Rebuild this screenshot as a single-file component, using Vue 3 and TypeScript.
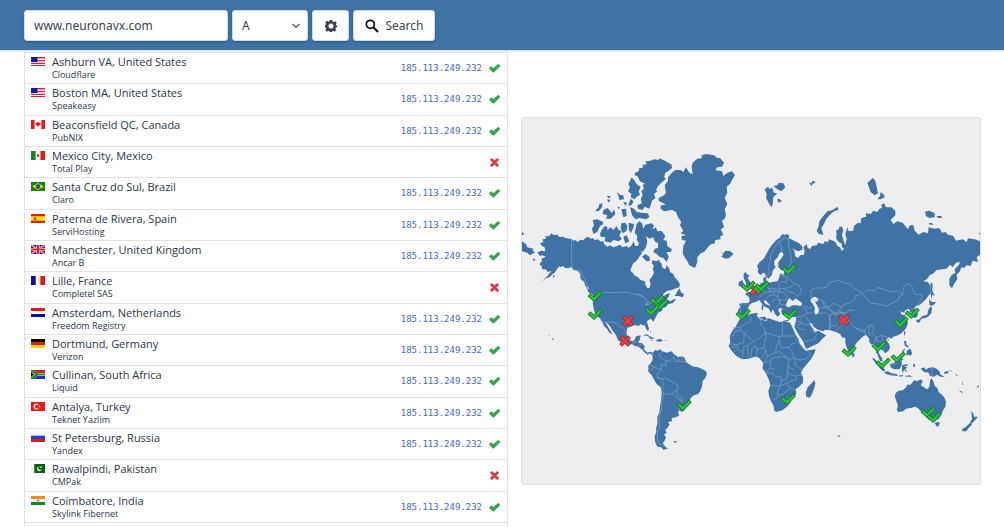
<script setup lang="ts">
import { ref } from 'vue'

type Sheet = [number, number, string]
interface Row { flag: string; city: string; isp: string; ok: boolean }

const domain = ref('www.neuronavx.com')
const recordType = ref('A')
const ip = '185.113.249.232'

const rows: Row[] = [
  { flag: 'us', city: 'Ashburn VA, United States', isp: 'Cloudflare', ok: true },
  { flag: 'us', city: 'Boston MA, United States', isp: 'Speakeasy', ok: true },
  { flag: 'ca', city: 'Beaconsfield QC, Canada', isp: 'PubNIX', ok: true },
  { flag: 'mx', city: 'Mexico City, Mexico', isp: 'Total Play', ok: false },
  { flag: 'br', city: 'Santa Cruz do Sul, Brazil', isp: 'Claro', ok: true },
  { flag: 'es', city: 'Paterna de Rivera, Spain', isp: 'ServiHosting', ok: true },
  { flag: 'gb', city: 'Manchester, United Kingdom', isp: 'Ancar B', ok: true },
  { flag: 'fr', city: 'Lille, France', isp: 'Completel SAS', ok: false },
  { flag: 'nl', city: 'Amsterdam, Netherlands', isp: 'Freedom Registry', ok: true },
  { flag: 'de', city: 'Dortmund, Germany', isp: 'Verizon', ok: true },
  { flag: 'za', city: 'Cullinan, South Africa', isp: 'Liquid', ok: true },
  { flag: 'tr', city: 'Antalya, Turkey', isp: 'Teknet Yazlim', ok: true },
  { flag: 'ru', city: 'St Petersburg, Russia', isp: 'Yandex', ok: true },
  { flag: 'pk', city: 'Rawalpindi, Pakistan', isp: 'CMPak', ok: false },
  { flag: 'in', city: 'Coimbatore, India', isp: 'Skylink Fibernet', ok: true },
]

const flags: Record<string, string> = {
  us: '<path fill="#fff" d="M0 0h14v9H0z"/><path fill="#d8232e" d="M0 0h14v1.5H0zM0 3h14v1.3H0zM0 5.7h14v1.3H0zM0 8h14v1H0z"/><path fill="#0a1fa0" d="M0 0h6.5v5H0z"/>',
  ca: '<path fill="#fff" d="M0 0h14v9H0z"/><path fill="#f21313" d="M0 0h3.6v9H0zM10.4 0H14v9h-3.6zM7 1.4l.8 1.3 1.8.4-.5 1.8-1.6.9V7h-1V5.8l-1.6-.9-.5-1.8 1.8-.4z"/>',
  mx: '<path fill="#fff" d="M0 0h14v9H0z"/><path fill="#0b8b1d" d="M0 0h4.6v9H0z"/><path fill="#f21313" d="M9.4 0H14v9H9.4z"/><path fill="#6b5120" d="M6 3.3h2v2.4H6z"/>',
  br: '<path fill="#078a12" d="M0 0h14v9H0z"/><path fill="#f3e81c" d="M7 1l5.6 3.5L7 8 1.4 4.5z"/><circle cx="7" cy="4.5" r="2.3" fill="#12208e"/><path stroke="#cfe0f5" stroke-width=".5" d="M5 4l4 1"/>',
  es: '<path fill="#ea1c12" d="M0 0h14v9H0z"/><path fill="#ffdf12" d="M0 2.2h14v4.6H0z"/><path fill="#b5371c" d="M3 3h1.4v1L6 6H2.2l.9-1z"/>',
  gb: '<path fill="#1b1d78" d="M0 0h14v9H0z"/><path stroke="#fff" stroke-width="1.6" d="M0 0l14 9M14 0L0 9"/><path stroke="#e01c32" stroke-width=".8" d="M0 0l14 9M14 0L0 9"/><path fill="#fff" d="M5.4 0h3.2v9H5.4zM0 3h14v3H0z"/><path fill="#e01c32" d="M6 0h2v9H6zM0 3.6h14v1.8H0z"/>',
  fr: '<path fill="#fff" d="M0 0h14v9H0z"/><path fill="#0c0ca6" d="M0 0h4.7v9H0z"/><path fill="#f21313" d="M9.3 0H14v9H9.3z"/>',
  nl: '<path fill="#fff" d="M0 0h14v9H0z"/><path fill="#ed1515" d="M0 0h14v3H0z"/><path fill="#0c0ca6" d="M0 6h14v3H0z"/>',
  de: '<path fill="#000" d="M0 0h14v3H0z"/><path fill="#d82410" d="M0 3h14v3H0z"/><path fill="#ffd21a" d="M0 6h14v3H0z"/>',
  za: '<path fill="#fff" d="M0 0h14v9H0z"/><path fill="#ef1515" d="M2 0h12v3H6.4z"/><path fill="#1434c0" d="M2 9h12V6H6.4z"/><path fill="#0b8a2c" d="M0 0h2l5 3.6h7v1.8H7L2 9H0z"/><path fill="#f0c41c" d="M0 1.2L4.6 4.5 0 7.8z"/><path fill="#111" d="M0 2.2l3.2 2.3L0 6.8z"/>',
  tr: '<path fill="#f21313" d="M0 0h14v9H0z"/><circle cx="5.4" cy="4.5" r="2.9" fill="#fff"/><circle cx="6.2" cy="4.5" r="2.1" fill="#f21313"/><path fill="#fff" d="M7.8 3.4l1.8 1.1-1.8 1.1z"/>',
  ru: '<path fill="#f4f4f4" d="M0 0h14v3H0z"/><path fill="#1c3fd4" d="M0 2.7h14V6H0z"/><path fill="#ee1616" d="M0 6h14v3H0z"/>',
  pk: '<path fill="#f4f4f4" d="M0 0h14v9H0z"/><path fill="#07610f" d="M3.3 0H14v9H3.3z"/><circle cx="8.4" cy="4.8" r="2.4" fill="#fff"/><circle cx="9.2" cy="4" r="2.1" fill="#07610f"/><path fill="#fff" d="M9.4 2.6h1.3v1.3H9.4z"/>',
  in: '<path fill="#f4f4f4" d="M0 0h14v9H0z"/><path fill="#f08c1c" d="M0 0h14v3H0z"/><path fill="#0a8f1e" d="M0 6h14v3H0z"/><circle cx="7" cy="4.5" r="1.1" fill="#6b78b8"/>',
}

// Joins points surveyed on neighbouring sheets; each sheet carries its own origin.
function trace(...sheets: Sheet[]): string {
  const points: string[] = []
  for (const [dx, dy, list] of sheets) {
    for (const pair of list.trim().split(/\s+/)) {
      const [x, y] = pair.split(',').map(Number)
      points.push(`${x + dx} ${y + dy}`)
    }
  }
  return 'M' + points.join('L')
}
const each = (dx: number, dy: number, lists: string[]): string[] => lists.map((l) => trace([dx, dy, l]))

const land: string[] = [
  // North and Central America
  trace(
    [0, 0, '60,310 70,306 68,298 78,296 77,288 86,289 95,280 100,285 112,284 118,291 130,290 136,294 155,297 160,302 166,300 172,306 182,299 190,301 196,294 205,290 211,296 218,294 224,300 234,298 242,305 250,303 252,312 262,320 270,316 280,322 292,318 300,314 308,322 320,318 326,324 336,314 340,304 346,318 354,318 357,306 362,300 366,312 372,318 362,328 366,340 358,350 350,362 340,370 335,380 331,392 338,398 345,408 352,410 362,420 375,424 376,434 382,444 388,445 392,432 388,420 396,410 402,398 398,385 402,378 395,370 398,360 408,364 416,360 425,372 426,382 436,388 440,375 448,386 450,396 460,402 464,412 472,420 480,432 478,442 464,446 455,450 442,452 432,460 424,474 440,462 450,460 446,470 440,478 450,484 462,478 468,478 458,490 445,492 438,500 428,505 426,512 414,518 408,530 400,545'],
    [0, 480, '392,56 380,64 384,76 387,88 384,94 378,86 374,76 368,76 362,73 355,78 346,75 335,78 322,84 319,98 322,110 328,120 337,124 344,119 348,109 362,106 360,116 355,128 366,130 374,138 372,148 382,158 390,155 398,158 396,166 390,160 383,164 372,156 366,148 355,140 345,138 335,132 325,134 312,130 295,122 291,114 288,105 278,92 272,82 262,70 256,66 264,80 270,90 277,103 268,98 262,88 252,78 248,68 240,55 228,48 222,30 218,10'],
    [0, 0, '218,490 222,475 219,464 205,452 206,444 196,438 192,426 182,412 180,400 172,392 160,390 155,382 144,384 135,385 130,378 120,382 118,378 112,386 104,398 95,405 88,412 76,416 65,425 82,408 90,398 95,392 84,396 76,388 66,388 66,380 58,372 66,364 64,356 78,350 66,346 60,348 52,338 62,332 76,334 74,322 66,318']
  ),
  // South America
  trace([0, 480, '398,158 405,150 414,152 420,147 426,154 440,158 455,154 462,163 475,171 486,169 494,174 498,186 510,194 520,200 534,202 545,206 558,214 561,222 556,234 548,243 546,260 541,272 535,282 522,286 512,294 508,305 500,318 492,332 484,336 478,330 474,338 478,346 468,352 455,354 456,364 444,366 449,374 442,384 436,390 440,398 432,404 438,412 434,422 428,430 436,440 444,446 430,449 424,442 412,440 405,425 404,408 409,396 408,384 412,372 412,350 418,338 420,320 423,300 425,280 422,262 410,252 403,240 395,226 384,214 386,204 384,198 392,190 398,180 397,168']),
  // Eurasia
  trace(
    [780, 60, '10,230 18,222 28,226 26,234 42,242 55,248 66,258 68,268 56,274 44,270 38,264 44,276 46,290 55,294 60,286 72,284 74,272 70,262 80,252 82,262 90,268 96,258 110,256 114,248 130,252 134,244 145,246 146,238 160,242 168,248 172,258 180,262 186,274 192,266 186,262 184,250 176,246 168,234 170,222 168,212 176,208 178,200 186,200 190,210 186,224 190,240 196,256 200,236 196,222 202,202 206,214 220,212 222,198 234,188 242,190 244,174 258,170 258,160 272,162 280,152 292,156 298,146 306,144 304,134 312,130 318,142 334,142 346,152 346,166 332,180 340,192 352,184 368,188 374,196 384,208 390,196 400,196 404,212 416,224 430,216 444,220 446,202 462,206 478,204 486,218 496,216 504,224 520,228 528,242 548,238 560,246 564,235 584,238 600,244 600,284 590,292 594,306 578,302 572,318 560,316 552,324 544,322 540,334 530,344 532,358 522,372 516,385 508,376 508,358 514,346 526,338 524,328 536,316 540,306 528,308 518,322 510,314 500,326 470,330 458,342 450,344 442,356 430,364 444,366 452,378 452,398 442,412 432,424 422,432'],
    [900, 450, '300,44 288,48 283,55 292,64 294,76 286,84 278,82 276,70 268,64 268,56 256,60 252,68 240,64 246,74 258,76 254,84 264,96 262,106 256,118 246,128 234,136 220,140 214,146 205,142 198,150 206,160 210,172 206,182 195,190 190,182 182,178 178,168 174,184 180,196 186,204 188,216 180,212 176,204 172,192 168,188 166,174 160,162 154,164 148,156 148,146 138,134 126,142 118,150 110,158 104,168 104,178 98,192 92,196 86,186 80,172 76,158 76,144 66,142 60,132 48,126 28,120 10,120'],
    [585, 480, '330,94 318,92 306,88 296,80 288,68 284,72 294,86 300,96 310,92 330,104 334,106 322,116 310,130 292,138 276,146 272,144 264,124 252,106 244,92 238,80 242,66 244,52 232,50 220,52 210,46 202,44 198,32 204,26 192,24 190,32 196,42 188,50 180,42 174,28'],
    [585, 240, '172,264 160,250 150,240 146,244 152,252 166,258 178,266 172,270 168,280 162,266 150,260 140,250 132,240 122,246 112,248 104,254 98,266 92,274 88,284 78,290 68,284 70,268 76,260 72,252 84,248 96,250 104,246 102,232 90,222 98,216 106,216 114,208 126,202 134,196 138,188 146,188 144,176 152,168 154,180 158,190 172,186 188,184 192,174 196,160 206,164 208,156 224,154 238,152 228,150 210,152 198,150 190,142 190,126 198,116 206,104 202,96 194,98 188,112 178,122 178,134 182,142 174,150 170,166 160,176 154,172 150,160 144,158 136,166 128,156 130,146 126,138 134,126 146,116 154,102 162,88 170,76 184,60 196,52 198,46 206,42 212,48']
  ),
  // Africa
  trace([585, 480, '78,50 92,46 105,42 118,40 128,39 126,48 134,56 148,62 154,64 158,54 170,58 182,62 195,66 208,63 225,68 234,86 242,104 250,116 254,130 262,142 272,152 286,150 302,148 298,160 288,178 276,192 264,206 258,218 264,232 264,248 252,260 242,268 244,282 232,294 226,308 214,322 202,331 184,336 178,332 176,318 168,304 162,288 160,272 166,256 162,240 152,218 142,205 145,190 136,178 130,172 118,170 102,176 82,178 68,170 60,164 48,150 41,138 46,126 44,108 52,92 62,80 68,68']),
  // Arctic islands and Canada
  ...each(0, 0, [
    '345,98 356,94 358,84 368,84 368,76 380,72 376,64 392,62 402,58 415,60 418,55 435,62 455,74 456,84 444,94 436,98 432,112 438,116 424,128 414,138 408,150 412,154 402,162 406,174 396,182 392,196 388,206 374,200 368,210 354,206 352,196 366,190 362,176 368,166 364,152 372,146 368,134 376,132 360,124 352,108 344,106',
    '335,112 344,122 350,132 362,142 356,154 360,164 350,170 344,178 332,172 334,162 324,154 330,142 325,132',
    '330,202 342,206 350,216 364,218 384,220 388,232 378,238 358,234 346,238 336,226',
    '350,252 358,244 366,250 370,266 376,254 394,250 402,256 398,268 408,262 412,274 424,272 436,288 430,300 440,302 442,318 456,328 452,336 440,336 446,350 440,366 430,354 418,350 410,342 400,336 404,326 414,324 414,310 404,304 400,292 388,296 378,288 382,304 378,322 368,336 358,328 360,312 350,300 352,288 344,278',
    '240,282 244,272 254,258 262,260 262,270 272,262 280,270 290,258 294,268 304,274 298,288 306,296 296,304 280,300 272,308 254,304 256,292 242,290',
    '218,240 232,238 250,246 248,254 240,258 232,276 220,282 216,266 222,256', '304,250 316,248 322,258 320,272 308,280 302,266',
    '326,248 342,252 340,264 332,280 326,268', '225,212 236,202 238,192 248,190 246,202 236,214', '250,210 262,204 270,212 276,220 282,208 286,222 272,236 258,236 262,226 248,222',
    '290,156 300,164 310,166 312,178 298,180 296,170', '304,208 318,206 320,228 310,232', '310,186 322,188 316,198', '260,168 272,168 268,176', '292,200 300,202 296,208', '324,198 332,176 340,184 336,194',
    '366,350 376,342 388,350 390,362 380,364 372,356', '310,290 320,286 328,304 316,310', '262,178 272,180 264,188', '6,276 14,282 6,286', '6,304 18,312 22,322 40,326 38,334 46,336 30,346 22,338 6,334', '38,355 48,360 40,362', '98,408 106,404 100,414',
    '464,468 478,445 484,458 492,462 488,472 476,468', '182,406 190,412 188,424 182,416', '196,436 206,450 214,460 220,464 206,458',
  ]),
  // Greenland, Svalbard, Iceland
  ...each(360, 0, [
    '155,80 158,68 172,56 186,54 184,46 200,42 222,46 232,54 240,54 252,68 246,80 232,82 226,90 246,94 250,108 262,98 276,94 285,106 276,120 270,132 260,140 262,158 254,174 262,192 254,208 258,224 254,236 246,242 252,262 242,268 250,284 240,290 242,298 226,300 224,310 210,314 202,324 192,336 182,340 172,352 172,366 165,384 148,376 142,364 134,352 128,340 130,318 138,302 126,300 124,288 138,286 122,280 130,272 120,256 124,246 114,232 108,216 96,210 72,214 62,206 62,196 78,194 56,182 56,174 72,166 78,158 74,136 84,122 84,112 96,98 106,90 122,90 130,96 138,82 148,98 158,102',
    '374,148 384,140 390,148 396,142 402,158 412,160 400,172 398,194 394,202 388,192 378,174 380,162', '400,138 412,136 416,128 430,130 436,142 424,154 412,148', '412,178 418,176 426,184 414,188',
    '240,334 250,340 256,332 272,334 280,342 268,354 256,356 244,350 250,342',
  ]),
  // Russian Arctic
  ...each(780, 60, ['86,66 94,70 98,62 108,66 98,72 94,78', '262,68 270,62 278,53 286,62 290,80 294,100 284,106 272,96', '292,118 300,108 302,96 312,104 314,112 302,118', '172,140 175,150 162,154 150,164 138,178 132,192 124,204 130,224 116,222 110,212 116,198 118,184 128,170 142,154 158,150', '435,155 448,152 464,160 464,172 448,174 438,168', '470,168 484,168 486,174 474,174', '446,190 454,188 462,194 450,194', '596,220 600,218 600,224']),
  // British Isles
  ...each(585, 240, ['92,155 96,164 104,164 98,174 104,184 110,192 114,202 102,206 88,206 94,196 92,186 86,174 86,162', '72,186 82,180 86,190 80,198 70,198', '132,292 150,290 156,296 150,302', '140,254 146,254 144,270 140,270', '204,300 222,300 218,304']),
  trace([585, 480, '298,240 301,250 298,264 290,284 284,293 274,290 272,278 278,262 286,254']),
  // Asia and Oceania
  ...each(900, 450, [
    '228,308 236,302 250,300 258,292 262,284 272,284 278,276 284,270 290,274 302,268 308,274 302,286 312,292 322,298 328,290 330,274 334,264 340,274 344,288 352,294 356,306 366,314 374,324 378,336 376,350 368,364 362,378 356,386 346,392 336,386 326,390 318,376 310,372 312,362 302,364 296,356 286,350 272,354 258,356 250,364 236,366 230,360 234,348 230,336 224,318',
    '344,398 352,396 360,398 356,408 350,410', '454,364 460,370 462,380 474,380 468,388 460,396 454,402 450,396 456,388', '450,398 456,404 446,414 438,424 428,424 426,418 438,410',
    '302,236 312,232 318,240 324,234 340,232 352,238 360,246 360,252 374,262 362,260 350,254 342,260 330,258 326,248 312,246', '210,222 220,220 230,210 240,202 250,208 244,214 246,222 240,236 232,238 222,238 212,232', '155,203 164,206 176,220 188,228 196,242 188,244 176,230 166,218', '192,246 204,244 214,250 230,252 234,258 212,256 198,252',
    '246,226 262,222 264,226 252,230 262,232 256,238 262,246 256,244 252,238 250,248 246,244', '252,154 258,152 260,164 268,172 260,172 254,166', '262,180 272,176 276,190 272,198 266,194 258,196', '246,184 256,174 254,180 248,188', '288,90 298,88 308,78 322,74 324,62 330,50 336,52 334,70 324,80 316,84 304,86 298,98 290,96', '328,28 336,36 348,36 344,42 334,48 328,44', '332,-24 338,-18 337,2 344,18 336,14 336,30 332,14', '96,186 104,192 102,202 97,200',
    '252,124 257,126 252,140', '202,148 208,148 204,154', '238,256 250,256 248,259 238,260', '254,258 270,256 276,260 260,260', '280,222 286,222 284,232 280,230', '372,246 386,242 384,250 374,252', '388,238 396,244 392,244', '404,250 414,258 410,258', '416,300 428,306 426,310', '468,292 478,286 476,292', '53,436 62,438 56,442', '426,272 430,284 427,284',
  ]),
  // Caribbean, Hawaii and Falklands
  ...each(0, 480, ['368,106 380,103 392,110 404,116 392,118 384,108', '408,120 420,116 430,122 420,125 410,124', '434,121 440,121 438,124', '393,120 400,122 396,124', '84,104 91,108 88,108', '96,113 102,118 98,120', '458,424 472,424 466,429', '390,92 394,94 392,98']),
]

const water: string[] = each(585, 240, [
  '212,258 216,246 222,234 232,242 240,240 238,234 246,238 262,250 258,258 244,256 232,256 222,262', '290,234 300,230 310,236 308,244 300,246 306,256 312,268 310,280 302,284 298,276 300,264 292,250 286,242',
])

const borders: string[] = [
  ...each(0, 0, ['155,297 155,382 166,388 172,392 180,390 192,414 196,424 206,444', '230,458 325,457 335,462 350,463 360,466 370,472 378,478 384,488 378,496 388,494 398,484 408,484 420,474', '350,463 366,466 372,474']),
  ...each(0, 480, [
    '240,64 258,66 272,66 290,70 298,80 308,80 318,96', '375,6 377,15 384,8 392,5', '340,134 342,126 352,126', '350,138 358,136 368,132', '360,148 370,148',
    '425,154 418,166 424,176 438,182 438,198 424,192 424,210 412,220 412,232 428,238 434,232 450,242 472,254 474,268 468,272 472,286 486,292 486,304 478,316 476,332', '387,196 398,198 412,206 424,208', '387,214 396,208 402,198', '412,232 428,238 430,256 424,266 432,282 426,300 424,330 418,350 418,380 412,400 414,430 430,436', '432,282 446,284 456,280 470,270', '456,280 474,296 486,304', '438,182 450,182 462,170 466,184 498,186', '474,172 476,184', '486,170 486,184',
  ]),
  ...each(780, 60, [
    '92,392 105,384 122,384 140,382 148,368 176,360 190,368 214,374 224,386 244,396 236,406 226,408 224,420 206,430 196,432 184,440 170,434 158,430 150,442 140,438 126,420 112,418 104,426 94,412 92,392', '248,400 262,390 284,392 290,382 310,388 334,396 350,392 368,404 356,412 356,420 334,430 318,438 296,432 274,430 262,420 256,410 246,400', '368,404 370,382 382,370 396,380 404,402 426,404 424,420 414,432 416,442', '184,440 178,454 192,464 204,452 224,450', '126,420 134,440 150,450 168,460 178,454', '118,446 140,440 158,458 172,466',
  ]),
  ...each(900, 450, [
    '80,84 90,100 104,112 118,118 134,120 148,106 158,106 162,118 156,130 168,142 184,136 204,142', '104,112 122,124 134,124', '134,120 136,134', '48,124 62,108 74,98 80,84', '28,118 32,104 28,86 32,72 50,72 66,66 80,70', '28,108 48,108 62,92 66,66', '168,142 170,152 182,154 192,166 192,180', '184,136 190,152 200,170', '168,142 162,160 170,180', '272,62 288,50', '336,234 336,258', '212,222 228,222 240,210', '150,108 146,124 152,138',
  ]),
  // Africa
  ...each(585, 480, [
    '104,44 108,62 90,72 76,82 50,84', '76,82 76,92 60,94 58,106 46,108', '76,90 116,124 134,114 152,98 146,82 138,76 138,62', '128,50 138,62', '152,98 192,110 192,122 184,140', '202,64 202,108 192,110', '202,108 240,108', '116,124 98,136 86,140 84,156 68,148 66,134 46,132', '88,96 86,128 66,134', '146,122 156,114 150,98', '108,172 110,148 120,136 126,148 146,144 150,120', '126,148 124,170', '98,138 100,174', '84,156 82,176', '146,144 152,150 144,170 136,176', '152,150 158,170 148,186', '184,140 182,158 158,168', '182,158 192,154 208,166 224,176', '192,122 198,144 220,142 230,132 242,128', '242,116 252,130 264,142 288,162 270,178 252,180 238,174 230,152 220,142', '224,176 240,176 240,196 262,210', '148,186 168,184 168,176 182,172 206,170 222,180 218,198 218,220', '168,184 164,204 152,216', '154,218 174,220 182,230 196,230 200,242 214,238 218,220 232,226 262,226', '164,256 196,258 200,242', '196,258 188,270 188,292 176,300', '188,284 204,284 216,272 226,264 214,250 230,242 244,240 244,228', '196,258 214,250', '226,264 240,268', '166,206 178,206', '216,292 224,294 220,302 212,300', '218,198 240,212', '48,142 64,140', '56,156 66,150',
  ]),
  // Europe and the Middle East
  ...each(585, 240, [
    '156,174 162,158 160,140 166,124 166,108 176,90 188,68 202,60 208,50', '202,96 196,74 190,64', '208,50 214,58 222,52 220,70 226,96 230,120 222,142', '190,164 208,168 216,176 214,186 196,186', '216,176 222,158', '208,168 202,162', '192,188 192,206 208,206 230,200 236,190 222,176', '156,190 160,206 166,216 150,218 138,232', '160,206 178,206 192,210', '166,216 178,212 190,216', '150,218 142,206 136,196', '178,212 176,224 160,228 152,238', '190,216 206,216 216,228 212,240', '206,206 216,214 236,218 246,228', '192,216 186,230 196,240 212,242', '176,224 190,232', '170,246 180,238 194,240 192,254 182,262', '194,240 196,254 212,254', '192,206 196,216', '76,250 88,252 98,254', '77,252 76,284', '118,206 130,214 136,218 134,232', '236,190 252,196 260,214 246,230', '244,292 262,288 278,280 270,266 262,258', '278,280 292,276', '268,256 282,264 290,262', '242,306 254,304 262,290', '254,304 268,314 288,310', '270,286 282,304 296,316', '312,280 330,278 346,290 344,310 340,334', '244,318 258,328 270,330',
  ]),
  ...each(585, 480, ['266,124 284,122 300,116 306,100', '246,76 262,68', '292,90 302,102']),
]

const passed = [[595, 296], [595, 314], [657, 300], [661, 304], [652, 310], [684, 405], [789, 269], [748, 286], [760, 288], [762, 286], [743, 314], [790, 314], [849, 351], [788, 399], [901, 322], [912, 313], [879, 346], [883, 363], [898, 357], [928, 412], [934, 417]]
const failed = [[628, 321], [625, 341], [844, 320]]
const place = (p: number[]): string => `translate(${(p[0] - 520) * 3} ${(p[1] - 140) * 3})`
</script>

<template>
  <div class="page">
    <header class="bar">
      <form class="search" @submit.prevent>
        <input v-model="domain" class="field domain" type="text" aria-label="Domain name" />
        <div class="picker">
          <select v-model="recordType" class="field type" aria-label="Record type">
            <option>A</option>
            <option>AAAA</option>
            <option>MX</option>
          </select>
          <svg class="chevron" viewBox="0 0 8 6"><path d="M.5 1L4 4.500 7.500 1" fill="none" stroke="#4b5058" stroke-width="1.200" /></svg>
        </div>
        <button class="field gear" type="button" aria-label="Settings">
          <svg viewBox="0 0 24 24" width="12" height="12">
            <path fill="#3b4453" fill-rule="evenodd" d="M9.500 0h5l.8 3.300 1.900.8L20.300 2.400l3.300 3.300-1.900 3 .7 1.600 1.600.4v3.600l-2.200.8-.8 1.900 1.700 2.900-3.400 3.400-3-1.700-1.600.7-.8 1.700h-4.400L8.700 22.300l-1.900-.7-3 1.700-3.200-3.400 1.700-2.900-.8-1.900L0 14.300v-4.200l1.500-.5.8-1.800L.5 5 4 1.700l3 1.700 1.700-.7zM12 7a5 5 0 1 0 0 10 5 5 0 0 0 0-10z" />
          </svg>
        </button>
        <button class="field submit" type="submit">
          <svg viewBox="0 0 14 14" width="14" height="14"><circle cx="5.300" cy="5.300" r="4" fill="none" stroke="#111" stroke-width="1.700" /><path d="M8.300 8.300L13 13" stroke="#111" stroke-width="2" /></svg>
          Search
        </button>
      </form>
    </header>

    <main class="content">
      <section class="results">
        <table aria-label="DNS results">
          <tbody>
            <tr v-for="row in rows" :key="row.city">
              <td class="flag"><svg viewBox="0 0 14 9" width="14" height="9" v-html="flags[row.flag]"></svg></td>
              <td class="place">
                <div class="city">{{ row.city }}</div>
                <div class="isp">{{ row.isp }}</div>
              </td>
              <td class="ip"><a v-if="row.ok" href="#">{{ ip }}</a></td>
              <td class="status">
                <svg v-if="row.ok" viewBox="0 0 33 27" width="11" height="9" role="img" aria-label="Resolved"><path fill="#2fa84c" d="M1 12L5 8q2-1 4 0l4 5L26 1q2-1 4 0l3 4q0 2-1 3L15 25q-2 2-4 0L1 15q-1-2 0-3z" /></svg>
                <svg v-else viewBox="0 0 26 26" width="9" height="9" role="img" aria-label="Failed"><path stroke="#dc3a44" stroke-width="8.500" stroke-linecap="round" d="M5 5l16 16M21 5L5 21" /></svg>
              </td>
            </tr>
          </tbody>
        </table>
      </section>

      <section class="map">
        <svg viewBox="6 -66 1374 1098" role="img" aria-label="World map of results">
          <defs>
            <g id="mark-ok" fill="none">
              <path d="M-14 0L-3 10 15-8" stroke="#147a1e" stroke-width="12" stroke-linecap="square" />
              <path d="M-14 0L-3 10 15-8" stroke="#27c93a" stroke-width="7" stroke-linecap="square" />
            </g>
            <g id="mark-bad" fill="none">
              <path d="M-9-9L9 9M9-9L-9 9" stroke="#8f2930" stroke-width="12" stroke-linecap="square" />
              <path d="M-9-9L9 9M9-9L-9 9" stroke="#f03a40" stroke-width="8" stroke-linecap="square" />
            </g>
          </defs>
          <g fill="#4073a5"><path v-for="d in land" :key="d" :d="d + 'Z'" /></g>
          <g fill="#eee"><path v-for="d in water" :key="d" :d="d + 'Z'" /></g>
          <g fill="none" stroke="#91b1d0" stroke-width="1.600"><path v-for="d in borders" :key="d" :d="d" /></g>
          <use href="#mark-bad" :transform="place([755, 290])" />
          <use v-for="(p, i) in passed" :key="i" href="#mark-ok" :transform="place(p)" />
          <use v-for="(p, i) in failed" :key="'f' + i" href="#mark-bad" :transform="place(p)" />
        </svg>
      </section>
    </main>
  </div>
</template>

<style>
body {
  background: #fff;
  overflow: hidden;
}
</style>

<style scoped>
.page {
  height: 100vh;
  display: flex;
  flex-direction: column;
  font-family: "Open Sans", "Noto Sans", sans-serif;
  color: #2b3648;
}
.bar {
  background: #4073a5;
  padding: 10px 24px 9px;
  box-shadow: 0 1px 2px #c3d7ee;
  z-index: 1;
}
.search {
  display: flex;
  gap: 4px;
}
.field {
  box-sizing: border-box;
  height: 31px;
  margin: 0;
  border: 1px solid #d4dae1;
  border-radius: 3px;
  background: #fff;
  box-shadow: 0 1px 2px #2c5480;
  font-family: "Noto Sans", "Open Sans", sans-serif;
  font-size: 12px;
  color: #3b4453;
  display: flex;
  align-items: center;
  justify-content: center;
}
.domain {
  width: 204px;
  padding: 0 9px;
}
.picker {
  position: relative;
}
.type {
  width: 76px;
  padding: 0 9px;
  appearance: none;
}
.chevron {
  position: absolute;
  right: 8px;
  top: 13px;
  width: 8px;
  height: 6px;
}
.gear {
  width: 37px;
  padding: 0;
}
.submit {
  width: 82px;
  padding: 0;
  gap: 7px;
}
.content {
  flex: 1;
  min-height: 0;
  display: grid;
  grid-template-columns: 484fr 460fr;
  gap: 13px;
  padding: 0 23px 0 24px;
}
.results {
  box-sizing: border-box;
  border: solid #dfe3e8;
  border-width: 0 1px;
  padding: 2px 0 4px;
  height: 100%;
}
table {
  width: 100%;
  height: 100%;
  border-collapse: collapse;
  border-bottom: 1px solid #dfe3e8;
}
td {
  padding: 0;
  border-top: 1px solid #dfe3e8;
}
.flag {
  width: 27px;
  vertical-align: top;
}
.flag svg {
  display: block;
  margin: 4px 0 0 6px;
}
.place {
  vertical-align: top;
}
.city {
  font-size: 11px;
  line-height: 17px;
}
.isp {
  font-size: 9px;
  line-height: 10px;
}
.ip {
  text-align: right;
  font-family: "DejaVu Sans Mono", monospace;
  font-size: 9px;
  line-height: 12px;
}
.ip a {
  color: #4169c8;
  text-decoration: none;
}
.status {
  width: 25px;
  text-align: center;
  line-height: 12px;
}
.status svg {
  display: block;
  margin: 1px auto 0;
}
.map {
  align-self: start;
  margin-top: 67px;
  border: 1px solid #dcdcdc;
  border-radius: 3px;
  background: #eee;
  overflow: hidden;
}
.map svg {
  display: block;
  width: 100%;
}
</style>
